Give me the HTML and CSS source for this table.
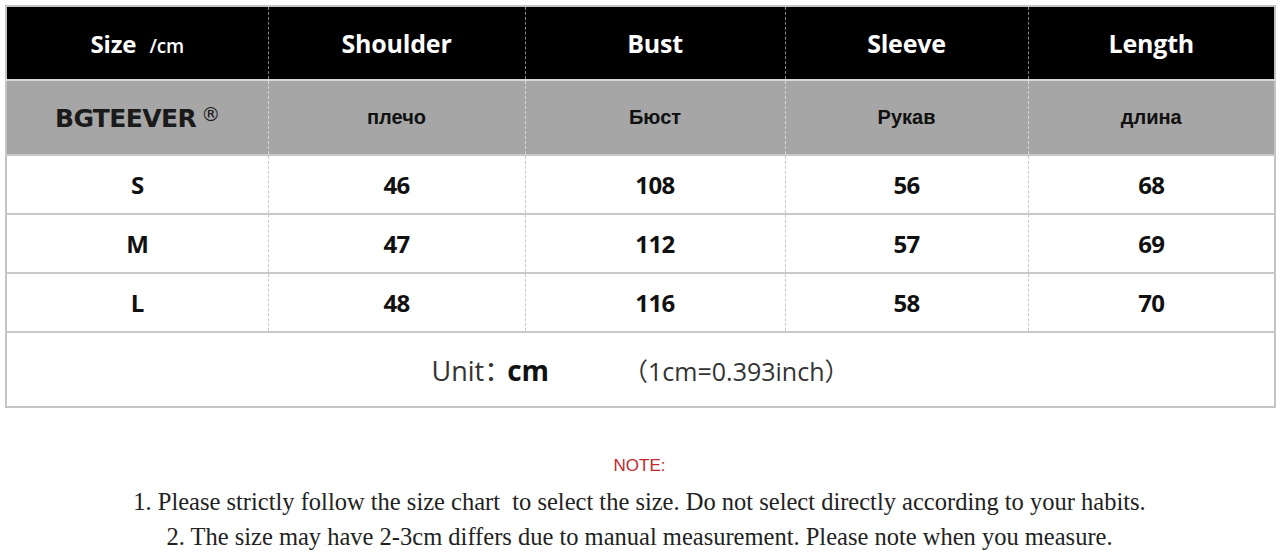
FILE: index.html
```html
<!DOCTYPE html>
<html>
<head>
<meta charset="utf-8">
<link rel="stylesheet" href="styles.css">
</head>
<body>
<div class="page">
<table class="chart">
  <colgroup>
    <col class="c1"><col class="c2"><col class="c3"><col class="c4"><col class="c5">
  </colgroup>
  <tr class="head">
    <td><span class="size">Size</span> <span class="unit">/cm</span></td>
    <td>Shoulder</td>
    <td>Bust</td>
    <td>Sleeve</td>
    <td>Length</td>
  </tr>
  <tr class="sub">
    <td class="brand">BGTEEVER<sup>®</sup></td>
    <td>плечо</td>
    <td>Бюст</td>
    <td>Рукав</td>
    <td>длина</td>
  </tr>
  <tr class="row">
    <td>S</td><td>46</td><td>108</td><td>56</td><td>68</td>
  </tr>
  <tr class="row">
    <td>M</td><td>47</td><td>112</td><td>57</td><td>69</td>
  </tr>
  <tr class="row">
    <td>L</td><td>48</td><td>116</td><td>58</td><td>70</td>
  </tr>
  <tr class="unitrow">
    <td colspan="5"><span class="ulabel">Unit<span class="colon">：</span></span><span class="ucm">cm</span><span class="uconv">（1cm=0.393inch）</span></td>
  </tr>
</table>
<div class="notes">
  <div class="note-title">NOTE:</div>
  <p class="n1">1. Please strictly follow the size chart&nbsp; to select the size. Do not select directly according to your habits.</p>
  <p class="n2">2. The size may have 2-3cm differs due to manual measurement. Please note when you measure.</p>
</div>
</div>
</body>
</html>
```

FILE: styles.css
```css
html, body {
  margin: 0;
  padding: 0;
  background: #ffffff;
}
.page {
  padding: 5px 6px 0 5px;
}
.chart {
  width: 1269px;
  border-collapse: collapse;
  table-layout: fixed;
  border: 2px solid #c4c4c4;
}
.c1 { width: 262px; }
.c2 { width: 257px; }
.c3 { width: 260px; }
.c4 { width: 243px; }
.c5 { width: 247px; }
.chart td {
  text-align: center;
  vertical-align: middle;
  padding: 0;
  border-left: 1px dashed #c8c8c8;
  border-right: 1px dashed #c8c8c8;
}
.head td {
  background: #000;
  color: #fff;
  height: 72px;
  font-family: "Open Sans", "Noto Sans", sans-serif;
  font-weight: 700;
  font-size: 25px;
  letter-spacing: -0.2px;
  border-bottom: 2px solid #d8d8d8;
  border-left-color: #888;
  border-right-color: #888;
}
.head .size { font-size: 24px; }
.head .unit { font-size: 19px; font-weight: 600; margin-left: 7px; }
.sub td {
  background: #a6a6a6;
  color: #111;
  height: 73px;
  font-family: "Liberation Sans", Arial, sans-serif;
  font-weight: 700;
  font-size: 20px;
  border-left: 1px dashed #d6d6d6;
  border-right: 1px dashed #d6d6d6;
}
.sub .brand {
  font-family: "DejaVu Sans", Verdana, sans-serif;
  font-size: 25px;
  color: #1a1a1a;
  letter-spacing: -0.6px;
}
.sub .brand sup {
  font-size: 19px;
  font-weight: 400;
  vertical-align: 6px;
  margin-left: 5px;
}
.row td {
  height: 59px;
  box-sizing: border-box;
  font-family: "Open Sans", "Noto Sans", sans-serif;
  font-weight: 700;
  font-size: 24px;
  color: #111;
  letter-spacing: -0.6px;
  border-top: 2px solid #c8c8c8;
}
.unitrow td {
  height: 75px;
  box-sizing: border-box;
  border-top: 2px solid #c8c8c8;
  font-family: "Open Sans", "Noto Sans CJK SC", sans-serif;
  color: #222;
  font-size: 25px;
}
.ulabel { font-weight: 400; font-size: 27px; color: #333; }
.ulabel .colon { letter-spacing: -10px; }
.ucm { font-weight: 700; font-size: 28px; margin-left: 6px; color: #111; }
.uconv { font-weight: 400; margin-left: 74px; font-size: 25px; color: #333; }
.notes {
  text-align: center;
  padding-top: 47px;
}
.note-title {
  font-family: "Liberation Sans", Arial, sans-serif;
  color: #c1272d;
  font-size: 17px;
  line-height: 22px;
  margin-bottom: 7px;
}
.notes p {
  margin: 0;
  font-family: "Liberation Serif", "Times New Roman", serif;
  font-size: 24.5px;
  line-height: 35px;
  color: #222;
}
```
